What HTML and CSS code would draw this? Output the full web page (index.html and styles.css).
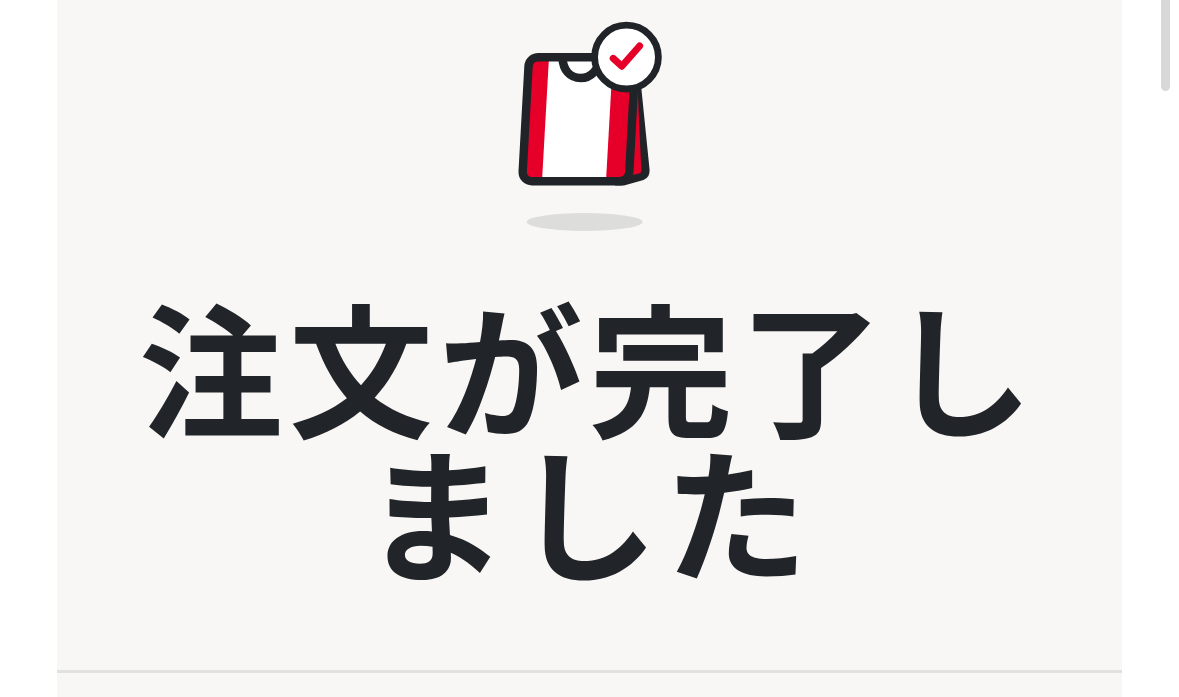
FILE: index.html
```html
<!DOCTYPE html>
<html lang="ja">
<head>
<meta charset="utf-8">
<title>注文が完了しました</title>
<link rel="stylesheet" href="styles.css">
</head>
<body>
<main class="panel">
  <svg class="bag" viewBox="500 0 180 240" width="180" height="240" aria-hidden="true">
    <ellipse class="shadow" cx="584.7" cy="222" rx="58" ry="9"/>
    <path class="dark" d="M634 80H640.500L649.600 170Q650 177.500 643.500 180L624 185.400H615Z"/>
    <path class="red" d="M637.600 88L641.300 170.500Q641.400 173 639 173.500L632.500 175Z"/>
    <path class="white" d="M538 57H635.500L629.300 172C629 177 625 181 620 181H532C526.500 181 522.400 177 522.700 171.500L528.500 66C528.800 61 533 57 538 57Z"/>
    <path class="red" d="M549 57H538C533 57 528.800 61 528.500 66L522.700 171.500C522.400 177 526.500 181 532 181H542Z"/>
    <path class="red" d="M613 57H635.500L629.300 172C629 177 625 181 620 181H606Z"/>
    <path class="outline" d="M538.500 57.200H635.500L629.300 172C629 177 625 181.200 620 181.200H532C526.500 181.200 522.400 177 522.700 171.500L528.500 66.500C528.800 61 533 57.200 538.500 57.200Z"/>
    <path class="outline" d="M562.500 58C563 70 570 78 580.500 78S599 70 599 58"/>
    <circle class="badge" cx="626.500" cy="57.100" r="31.900"/>
    <path class="check" d="M613.200 58.400L621.800 66.200L639.600 46"/>
  </svg>
  <h1 class="title">注文が完了しました</h1>
  <hr class="divider">
</main>
<div class="scroll-thumb"></div>
</body>
</html>
```
FILE: styles.css
```css
body {
  margin: 0;
  height: 697px;
  overflow: hidden;
  display: flex;
  background: #fff;
}
.panel {
  width: 1065px;
  height: 697px;
  margin-left: 57px;
  flex: none;
  display: flex;
  flex-direction: column;
  background: #f8f7f5;
}
.bag {
  display: block;
  margin-left: 443px;
  flex: none;
}
.shadow { fill: #dddddb; }
.red { fill: #e60029; }
.white { fill: #fff; }
.dark { fill: #202327; }
.outline {
  fill: none;
  stroke: #202327;
  stroke-width: 8.4;
  stroke-linejoin: round;
}
.badge {
  fill: #fff;
  stroke: #202327;
  stroke-width: 6.8;
}
.check {
  fill: none;
  stroke: #e60029;
  stroke-width: 7;
  stroke-linecap: round;
  stroke-linejoin: round;
}
.title {
  margin: 52px 76px 0 75px;
  font: 700 144px/144px "Noto Sans CJK JP", sans-serif;
  letter-spacing: 6px;
  color: #212529;
  text-align: center;
  word-break: break-all;
}
.divider {
  width: 100%;
  height: 3px;
  margin: 90px 0 0;
  border: 0;
  background: #e1e1df;
}
.scroll-thumb {
  width: 9px;
  height: 91px;
  margin-left: 39px;
  background: #d8d8d8;
  border-radius: 0 0 5px 5px;
}
```
